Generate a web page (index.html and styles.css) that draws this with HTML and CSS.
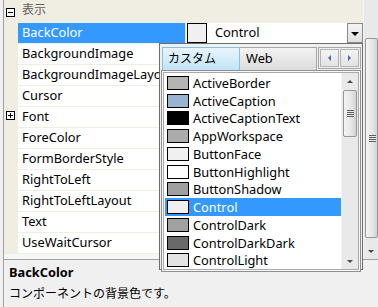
FILE: index.html
```html
<!DOCTYPE html>
<html lang="ja">
<head>
<meta charset="utf-8">
<link rel="stylesheet" href="styles.css">
</head>
<body>
<div class="window">
  <div class="top">
    <div class="grid">
      <div class="cat">
        <span class="gut"><span class="pm"><span class="h"></span></span></span>
        <span class="cat-label">表示</span>
      </div>
      <div class="row sel">
        <span class="gut"></span><span class="name">BackColor</span><span class="sep"></span>
        <span class="val"><span class="vswatch"></span><span class="vtext">Control</span><span class="ddbtn"><span class="tri-down"></span></span></span>
      </div>
      <div class="row"><span class="gut"></span><span class="name">BackgroundImage</span><span class="sep"></span><span class="val"></span></div>
      <div class="row"><span class="gut"></span><span class="name">BackgroundImageLayout</span><span class="sep"></span><span class="val"></span></div>
      <div class="row"><span class="gut"></span><span class="name">Cursor</span><span class="sep"></span><span class="val"></span></div>
      <div class="row"><span class="gut"><span class="pm"><span class="h"></span><span class="v"></span></span></span><span class="name">Font</span><span class="sep"></span><span class="val"></span></div>
      <div class="row"><span class="gut"></span><span class="name">ForeColor</span><span class="sep"></span><span class="val"></span></div>
      <div class="row"><span class="gut"></span><span class="name">FormBorderStyle</span><span class="sep"></span><span class="val"></span></div>
      <div class="row"><span class="gut"></span><span class="name">RightToLeft</span><span class="sep"></span><span class="val"></span></div>
      <div class="row"><span class="gut"></span><span class="name">RightToLeftLayout</span><span class="sep"></span><span class="val"></span></div>
      <div class="row"><span class="gut"></span><span class="name">Text</span><span class="sep"></span><span class="val"></span></div>
      <div class="row last"><span class="gut"></span><span class="name">UseWaitCursor</span><span class="sep"></span><span class="val"></span></div>
    </div>
    <div class="vscroll">
      <div class="thumb"><span class="grip"></span></div>
      <div class="sbtn"><span class="tri-small-down"></span></div>
    </div>
  </div>
  <div class="help">
    <div class="help-title">BackColor</div>
    <div class="help-desc">コンポーネントの背景色です。</div>
  </div>

  <div class="popup">
    <div class="tabs">
      <div class="tab tab-sel">カスタム</div>
      <div class="tab tab-web">Web</div>
      <div class="tab-arrows">
        <span class="abtn"><span class="tri-left"></span></span>
        <span class="abtn"><span class="tri-right"></span></span>
      </div>
    </div>
    <div class="panel">
      <div class="list">
        <div class="items">
          <div class="item"><span class="sw" style="background:#b4b4b4"></span>ActiveBorder</div>
          <div class="item"><span class="sw" style="background:#99b4d1"></span>ActiveCaption</div>
          <div class="item"><span class="sw" style="background:#000000"></span>ActiveCaptionText</div>
          <div class="item"><span class="sw" style="background:#ababab"></span>AppWorkspace</div>
          <div class="item"><span class="sw" style="background:#f0f0f0"></span>ButtonFace</div>
          <div class="item"><span class="sw" style="background:#ffffff"></span>ButtonHighlight</div>
          <div class="item"><span class="sw" style="background:#a0a0a0"></span>ButtonShadow</div>
          <div class="item item-sel"><span class="sw" style="background:#f0f0f0"></span>Control</div>
          <div class="item"><span class="sw" style="background:#a0a0a0"></span>ControlDark</div>
          <div class="item"><span class="sw" style="background:#696969"></span>ControlDarkDark</div>
          <div class="item"><span class="sw" style="background:#e3e3e3"></span>ControlLight</div>
        </div>
        <div class="lscroll">
          <div class="lbtn"><span class="tri-small-up"></span></div>
          <div class="lthumb"><span class="grip"></span></div>
          <div class="lspacer"></div>
          <div class="lbtn"><span class="tri-small-down"></span></div>
        </div>
      </div>
    </div>
  </div>
</div>
</body>
</html>
```

FILE: styles.css
```css
* { box-sizing: border-box; }
html, body { margin: 0; padding: 0; }
body {
  background: #f0f0f0;
  font-family: "Noto Sans", "Noto Sans CJK JP", sans-serif;
  font-size: 12.8px;
  color: #000;
}
.window {
  position: relative;
  width: 378px;
  height: 307px;
  overflow: hidden;
  background: #f0f0f0;
}
.top {
  display: flex;
  height: 259px;
  padding-left: 3px;
}
.grid {
  width: 360px;
  border-left: 1px solid #a0a0a0;
  background: #f7f7f7;
  display: flex;
  flex-direction: column;
}
.cat {
  display: flex;
  height: 22px;
  background: #f0ede2;
  align-items: flex-start;
}
.gut {
  width: 14px;
  flex: none;
  background: #f0ede2;
  position: relative;
}
.pm {
  position: absolute;
  left: 2px;
  top: 8px;
  width: 9px;
  height: 9px;
  border: 1px solid #000;
  background: #fff;
}
.pm .h {
  position: absolute;
  left: 1px;
  top: 3px;
  width: 5px;
  height: 1px;
  background: #000;
}
.pm .v {
  position: absolute;
  left: 3px;
  top: 1px;
  width: 1px;
  height: 5px;
  background: #000;
}
.cat-label {
  padding-left: 4px;
  line-height: 20px;
  color: #5f5f5f;
  font-size: 12px;
}
.row {
  display: flex;
  height: 21px;
}
.row.last { height: 22px; border-bottom: 1px solid #f0ede2; }
.row .gut .pm { top: 5px; }
.name {
  width: 167px;
  flex: none;
  border-top: 1px solid #f0ede2;
  background: #fff;
  padding-left: 4px;
  line-height: 19px;
  white-space: nowrap;
  overflow: hidden;
}
.sep {
  width: 1px;
  flex: none;
  background: #f0ede2;
}
.val {
  flex: 1;
  border-top: 1px solid #f0ede2;
  background: #fff;
  display: flex;
  align-items: stretch;
  padding-left: 1px;
}
.row.sel .name {
  background: #3399ff;
  color: #fff;
}
.vswatch {
  width: 20px;
  height: 20px;
  border: 1px solid #000;
  background: #f0f0f0;
  flex: none;
}
.vtext {
  padding-left: 8px;
  line-height: 19px;
}
.ddbtn {
  margin-left: auto;
  width: 16px;
  border: 1px solid #8a8a8a;
  background: linear-gradient(#f4f4f4, #e0e0e0);
  display: flex;
  align-items: center;
  justify-content: center;
}
.tri-down {
  width: 0;
  height: 0;
  border-left: 4px solid transparent;
  border-right: 4px solid transparent;
  border-top: 4px solid #000;
  margin-top: 1px;
}
.vscroll {
  width: 15px;
  flex: none;
  background: #e9e9e9;
  border-left: 1px solid #f4f4f4;
  display: flex;
  flex-direction: column;
}
.thumb {
  margin-top: 38px;
  height: 200px;
  margin-left: 1px;
  margin-right: 0;
  border: 1px solid #979797;
  border-radius: 2px;
  background: linear-gradient(90deg, #f4f4f4, #e6e6e6 60%, #d2d2d2);
  display: flex;
  align-items: center;
  justify-content: center;
}
.grip {
  width: 7px;
  height: 7px;
  background: repeating-linear-gradient(#5e5e5e 0 1px, #e8e8e8 1px 2px);
  margin-left: 1px;
}
.sbtn {
  margin-top: auto;
  height: 16px;
  display: flex;
  align-items: center;
  justify-content: center;
}
.tri-small-down {
  width: 0;
  height: 0;
  border-left: 3.5px solid transparent;
  border-right: 3.5px solid transparent;
  border-top: 3px solid #4a4a4a;
}
.tri-small-up {
  width: 0;
  height: 0;
  border-left: 3.5px solid transparent;
  border-right: 3.5px solid transparent;
  border-bottom: 3px solid #4a4a4a;
}
.help {
  margin-left: 3px;
  height: 48px;
  border-top: 1px solid #a0a0a0;
  border-left: 1px solid #a0a0a0;
  background: #f0f0f0;
  padding: 2px 0 0 5px;
}
.help-title {
  font-weight: bold;
  line-height: 20px;
}
.help-desc {
  margin-top: 2px;
  line-height: 20px;
  font-size: 12px;
}

/* popup */
.popup {
  position: absolute;
  left: 159px;
  top: 43px;
  width: 204px;
  height: 227px;
  border: 1px solid #6d6d6d;
  background: #f0f0f0;
  padding: 3px 1px 2px 1px;
  display: flex;
  flex-direction: column;
}
.tabs {
  display: flex;
  height: 23px;
  flex: none;
  margin-left: 1px;
}
.tab {
  height: 23px;
  line-height: 21px;
  border: 1px solid #898c95;
  border-bottom: none;
}
.tab-sel {
  width: 78px;
  padding-left: 5px;
  border-color: #8cbfdf;
  background: linear-gradient(#e8f5fd, #c0e4f7);
  font-size: 12px;
}
.tab-web {
  width: 77px;
  padding-left: 6px;
  border-left: none;
  border-color: #a6a6a6;
  background: linear-gradient(#f3f3f3, #dcdcdc);
}
.tab-arrows {
  margin-left: 1px;
  width: 43px;
  height: 22px;
  border: 1px solid #a6a6a6;
  background: #f0f0f0;
  display: flex;
  gap: 1px;
  padding: 1px;
}
.abtn {
  flex: 1;
  border: 1px solid #b4b4b4;
  background: linear-gradient(#f4f4f4, #e2e2e2);
  display: flex;
  align-items: center;
  justify-content: center;
}
.tri-left {
  width: 0;
  height: 0;
  border-top: 3px solid transparent;
  border-bottom: 3px solid transparent;
  border-right: 3px solid #4766c9;
}
.tri-right {
  width: 0;
  height: 0;
  border-top: 3px solid transparent;
  border-bottom: 3px solid transparent;
  border-left: 3px solid #4766c9;
}
.panel {
  flex: 1;
  border: 1px solid #8e8f8f;
  background: #f8f8f8;
  padding: 1px;
  display: flex;
}
.list {
  flex: 1;
  border: 1px solid #a9a9a9;
  background: #fff;
  display: flex;
}
.items {
  flex: 1;
  overflow: hidden;
  padding-left: 1px;
  padding-top: 1px;
}
.item {
  height: 17.75px;
  display: flex;
  align-items: center;
  padding-left: 2px;
  white-space: nowrap;
  line-height: 16px;
}
.item-sel {
  background: #3399ff;
  color: #fff;
}
.sw {
  width: 22px;
  height: 14px;
  border: 1px solid #000;
  margin-right: 4px;
  flex: none;
}
.lscroll {
  width: 17px;
  flex: none;
  background: #e9e9e9;
  border-left: 1px solid #f4f4f4;
  display: flex;
  flex-direction: column;
}
.lbtn {
  height: 16px;
  display: flex;
  align-items: center;
  justify-content: center;
  flex: none;
}
.lthumb {
  height: 47px;
  margin: 1px 1px 0 1px;
  border: 1px solid #979797;
  border-radius: 2px;
  background: linear-gradient(90deg, #f4f4f4, #e6e6e6 60%, #d2d2d2);
  display: flex;
  align-items: center;
  justify-content: center;
}
.lspacer { flex: 1; }
```
